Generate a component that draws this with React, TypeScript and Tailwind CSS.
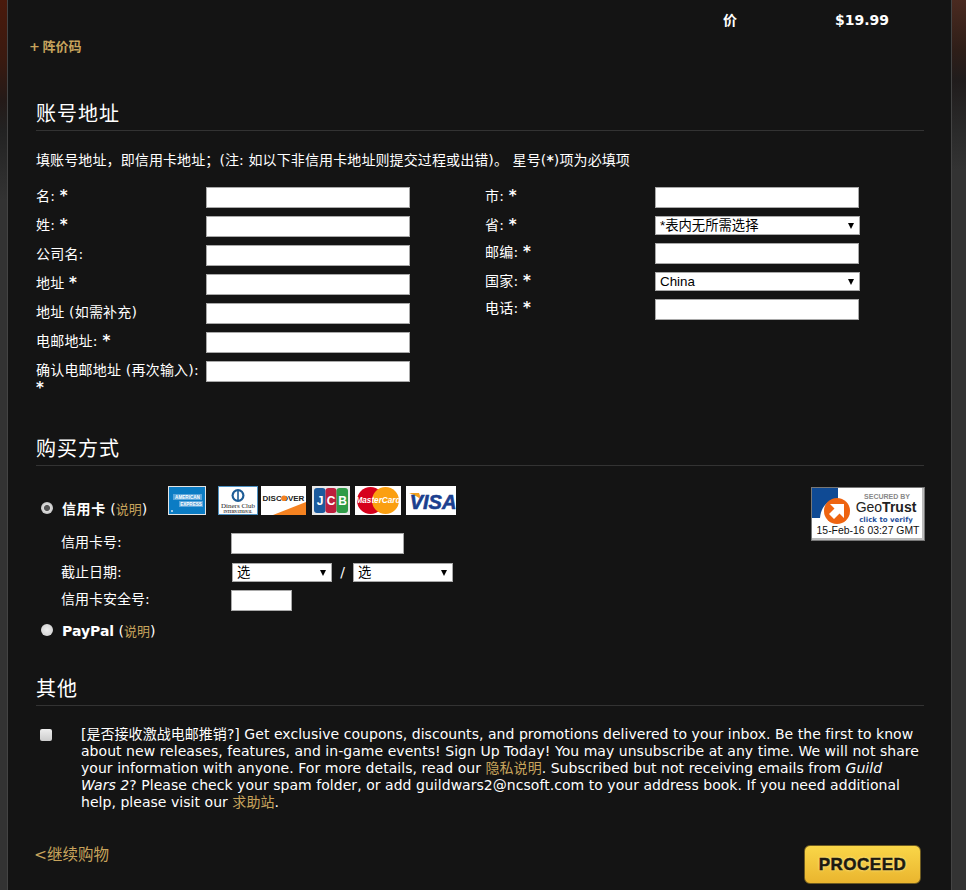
const SANS = "font-['DejaVu_Sans','Noto_Sans_CJK_SC',sans-serif]";

const SectionTitle = ({ title }: { title: string }) => (
  <h2 className="h-[29px] border-b border-[#333] text-[20px] leading-[24px] tracking-[1px] text-white">
    {title}
  </h2>
);

const TextField = ({ width = "w-[204px]" }: { width?: string }) => (
  <input
    type="text"
    className={`h-[21px] ${width} border border-[#a9a9a9] bg-white`}
  />
);

const SelectField = ({ value, width }: { value: string; width: string }) => (
  <div
    className={`relative flex h-[19px] ${width} items-center border border-[#a9a9a9] bg-white pl-[4px] font-['Liberation_Sans','Noto_Sans_CJK_SC',sans-serif] text-[13.33px] text-black`}
  >
    <span>{value}</span>
    {/* dropdown arrow */}
    <span className="absolute top-[6px] right-[5px] h-0 w-0 border-x-[3.5px] border-t-[6px] border-x-transparent border-t-black" />
  </div>
);

const Row = ({
  label,
  required,
  children,
}: {
  label: string;
  required?: boolean;
  children: React.ReactNode;
}) => (
  <div className="flex items-start">
    <label className="w-[170px] shrink-0 leading-[18px] tracking-[0.2px]">
      {label}
      {required && (
        <>
          {" "}
          <b className="text-[15px]">*</b>
        </>
      )}
    </label>
    {children}
  </div>
);

const Amex = () => (
  <svg width="38" height="29" viewBox="0 0 38 29">
    <rect width="38" height="29" fill="#e4e4e4" />
    <rect x="1" y="1" width="36" height="27" fill="#0b7cc4" />
    <rect x="5" y="8" width="29" height="6" fill="#5aa5da" />
    <rect x="11" y="15" width="24" height="6" fill="#5aa5da" />
    <text x="19.5" y="12.8" textAnchor="middle" fontSize="4.6" fontWeight="700" fill="#fff" fontFamily="Liberation Sans">AMERICAN</text>
    <text x="23" y="19.8" textAnchor="middle" fontSize="4.6" fontWeight="700" fill="#fff" fontFamily="Liberation Sans">EXPRESS</text>
    <circle cx="4" cy="25" r="1" fill="#cfe6f6" />
  </svg>
);

const Diners = () => (
  <svg width="40" height="29" viewBox="0 0 40 29">
    <rect x="0.5" y="0.5" width="39" height="28" fill="#fff" stroke="#4f93c4" />
    <circle cx="20" cy="9.5" r="6.5" fill="#1d5c96" />
    <circle cx="20" cy="9.5" r="4.3" fill="#fff" />
    <rect x="19.2" y="5" width="1.6" height="9" fill="#1d5c96" />
    <text x="20" y="22" textAnchor="middle" fontSize="7" fill="#222" fontFamily="Liberation Serif">Diners Club</text>
    <text x="20" y="26.5" textAnchor="middle" fontSize="3.4" fontWeight="700" fill="#222" fontFamily="Liberation Serif">INTERNATIONAL</text>
  </svg>
);

const Discover = () => (
  <svg width="45" height="29" viewBox="0 0 45 29">
    <rect width="45" height="29" fill="#fff" />
    <path d="M12 29 L45 16 V29 Z" fill="#f58220" />
    <text x="22.5" y="15" textAnchor="middle" fontSize="8" fontWeight="700" fill="#222" fontFamily="Liberation Sans">DISCOVER</text>
    <circle cx="23" cy="12.2" r="2.8" fill="#f58220" />
  </svg>
);

const Jcb = () => (
  <svg width="38" height="29" viewBox="0 0 38 29">
    <rect width="38" height="29" fill="#e8e8e8" />
    <rect x="2" y="2" width="11.5" height="25" rx="3" fill="#1b5a9d" />
    <rect x="13.5" y="2" width="11" height="25" rx="3" fill="#bd1f3d" />
    <rect x="24.5" y="2" width="11.5" height="25" rx="3" fill="#2f9b47" />
    <text x="8" y="19" textAnchor="middle" fontSize="12" fontWeight="700" fill="#fff" fontFamily="Liberation Sans">J</text>
    <text x="19" y="19" textAnchor="middle" fontSize="12" fontWeight="700" fill="#fff" fontFamily="Liberation Sans">C</text>
    <text x="30.5" y="19" textAnchor="middle" fontSize="12" fontWeight="700" fill="#fff" fontFamily="Liberation Sans">B</text>
  </svg>
);

const MasterCard = () => (
  <svg width="46" height="29" viewBox="0 0 46 29">
    <rect width="46" height="29" fill="#fff" />
    <circle cx="15.5" cy="14.5" r="13.5" fill="#d6001c" />
    <circle cx="30.5" cy="14.5" r="13.5" fill="#fb9f10" />
    <text x="23" y="17" textAnchor="middle" fontSize="8.2" fontWeight="700" fontStyle="italic" fill="#fff" fontFamily="Liberation Sans">MasterCard</text>
  </svg>
);

const Visa = () => (
  <svg width="50" height="29" viewBox="0 0 50 29">
    <rect width="50" height="29" fill="#fff" />
    <path d="M3 7 H13 L16 15 C13 11 8 9 3 7 Z" fill="#f2a01e" />
    <text x="27" y="22.5" textAnchor="middle" fontSize="20" fontWeight="700" fontStyle="italic" fill="#1a3f8f" stroke="#1a3f8f" strokeWidth="0.6" fontFamily="Liberation Sans">VISA</text>
  </svg>
);

const GeoTrust = () => (
  <div className="-mr-[1px] mt-[1px] h-[54px] w-[114px] shrink-0">
    <svg width="114" height="54" viewBox="0 0 114 54">
      <rect width="114" height="54" fill="#777" />
      <rect x="1" y="1" width="112" height="52" fill="#bbb" />
      <rect x="1" y="1" width="110" height="50" fill="#fff" />
      <path d="M1 1 H27 V12 C16 13 10 20 9 31 H1 Z" fill="#0f4a94" />
      <circle cx="26" cy="24" r="13" fill="#ee6411" />
      <path d="M19 17 H33 V31 L28.5 26.5 L23 32 L18 27 L23.5 21.5 Z" fill="#fff" />
      <text x="76" y="12" textAnchor="middle" fontSize="7" fontWeight="700" fill="#888" fontFamily="Liberation Sans">SECURED BY</text>
      <text x="75" y="25" textAnchor="middle" fontSize="14" fill="#222" fontFamily="Liberation Sans">
        Geo<tspan fontWeight="700">Trust</tspan>
      </text>
      <text x="75" y="34.5" textAnchor="middle" fontSize="7" fontWeight="700" fill="#1f4f9c" fontFamily="DejaVu Sans">click to verify</text>
      <text x="57" y="47" textAnchor="middle" fontSize="10.4" fill="#111" fontFamily="Liberation Sans">15-Feb-16 03:27 GMT</text>
    </svg>
  </div>
);

export default function App() {
  return (
    <div className={`flex h-[890px] w-[966px] overflow-hidden bg-[#333] text-[14px] text-white ${SANS}`}>
      {/* left page edge */}
      <div className="w-[8px] shrink-0 border-r border-[#444] bg-[linear-gradient(180deg,#4a1a0c_0,#3a1a10_60px,#241a18_100px,#222_130px,#333_200px)]" />

      <main className="w-[943px] shrink-0 bg-[#141414] pr-[27px] pl-[28px]">
        {/* Order total */}
        <div className="flex h-[29px] items-end text-[14px] leading-[18px] font-bold">
          <span className="ml-[687px] w-[112px]">价</span>
          <span>$19.99</span>
        </div>
        <a className="-ml-[7px] mt-[10px] block text-[13px] leading-[16px] font-bold text-[#c8a45c] [word-spacing:-2px]">+ 阵价码</a>

        {/* Billing address */}
        <section className="mt-[47px]">
          <SectionTitle title="账号地址" />
          <p className="mt-[20px] leading-[18px] tracking-[0.11px]">
            填账号地址，即信用卡地址；(注: 如以下非信用卡地址则提交过程或出错)。 星号(<b>*</b>)项为必填项
          </p>
          <div className="mt-[18px] flex">
            <div className="flex w-[449px] flex-col gap-[8px]">
              <Row label="名:" required><TextField /></Row>
              <Row label="姓:" required><TextField /></Row>
              <Row label="公司名:"><TextField /></Row>
              <Row label="地址" required><TextField /></Row>
              <Row label="地址 (如需补充)"><TextField /></Row>
              <Row label="电邮地址:" required><TextField /></Row>
              <Row label="确认电邮地址 (再次输入):" required><TextField /></Row>
            </div>
            <div className="flex flex-col">
              <Row label="市:" required><TextField /></Row>
              <div className="mt-[8px]"><Row label="省:" required><SelectField value="*表内无所需选择" width="w-[205px]" /></Row></div>
              <div className="mt-[8px]"><Row label="邮编:" required><TextField /></Row></div>
              <div className="mt-[8px]"><Row label="国家:" required><SelectField value="China" width="w-[205px]" /></Row></div>
              <div className="mt-[8px]"><Row label="电话:" required><TextField /></Row></div>
            </div>
          </div>
        </section>

        {/* Payment method */}
        <section className="mt-[40px]">
          <SectionTitle title="购买方式" />
          <div className="mt-[20px] flex items-start justify-between">
            <div>
              <div className="flex items-start">
                <input
                  type="radio"
                  readOnly
                  className="mt-[16px] ml-[5px] h-[12px] w-[12px] appearance-none rounded-full bg-[radial-gradient(circle,#555_0,#555_30%,#ddd_42%,#aaa_100%)]"
                />
                <div className="mt-[14px] ml-[9px] w-[106px] leading-[18px]">
                  <b className="tracking-[0.6px]">信用卡</b> (<span className="text-[13px] text-[#c8a45c]">说明</span>)
                </div>
                <div className="flex items-center gap-[3px]">
                  <Amex />
                  <div className="ml-[9px]"><Diners /></div>
                  <Discover />
                  <div className="ml-[3px]"><Jcb /></div>
                  <div className="ml-[2px]"><MasterCard /></div>
                  <div className="ml-[2px]"><Visa /></div>
                </div>
              </div>
              <div className="mt-[14px] ml-[25px] flex flex-col">
                <div className="flex items-start">
                  <label className="w-[170px] leading-[18px]">信用卡号:</label>
                  <TextField width="w-[173px]" />
                </div>
                <div className="mt-[9px] flex items-start">
                  <label className="w-[171px] leading-[18px]">截止日期:</label>
                  <SelectField value="选" width="w-[100px]" />
                  <span className="w-[21px] text-center leading-[18px]">/</span>
                  <SelectField value="选" width="w-[100px]" />
                </div>
                <div className="mt-[8px] flex items-start">
                  <label className="w-[170px] leading-[18px]">信用卡安全号:</label>
                  <TextField width="w-[61px]" />
                </div>
              </div>
              <div className="mt-[11px] flex items-start">
                <input
                  type="radio"
                  readOnly
                  className="mt-[2px] ml-[5px] h-[12px] w-[12px] appearance-none rounded-full bg-[radial-gradient(circle,#eee_0,#ccc_100%)]"
                />
                <div className="ml-[9px] leading-[18px]">
                  <b>PayPal</b> (<span className="text-[13px] text-[#c8a45c]">说明</span>)
                </div>
              </div>
            </div>
            <GeoTrust />
          </div>
        </section>

        {/* Other */}
        <section className="mt-[36px]">
          <SectionTitle title="其他" />
          <div className="mt-[20px] flex items-start">
            <input
              type="checkbox"
              readOnly
              className="mt-[3px] ml-[4px] h-[12px] w-[12px] shrink-0 appearance-none rounded-[2px] bg-gradient-to-b from-[#eee] to-[#ccc]"
            />
            <p className="mr-[4px] ml-[29px] text-[14px] leading-[17px] tracking-[0.04px]">
              [是否接收激战电邮推销?] Get exclusive coupons, discounts, and promotions delivered to your inbox. Be the first to know about new releases, features, and in-game events! Sign Up Today! You may unsubscribe at any time. We will not share your information with anyone. For more details, read our <a className="text-[#c8a45c]">隐私说明</a>. Subscribed but not receiving emails from <i>Guild Wars 2</i>? Please check your spam folder, or add guildwars2@ncsoft.com to your address book. If you need additional help, please visit our <a className="text-[#c8a45c]">求助站</a>.
            </p>
          </div>
        </section>

        {/* Footer actions */}
        <div className="mt-[34px] flex items-start justify-between">
          <a className="-ml-[2px] text-[15.5px] leading-[20px] text-[#c8a45c]">&lt;继续购物</a>
          <button className="mr-[3px] h-[39px] w-[117px] rounded-[6px] border border-[#6d5a20] bg-gradient-to-b from-[#f9d648] to-[#eab52e] font-['Liberation_Sans',sans-serif] text-[17px] font-bold tracking-[0.5px] text-[#1c1a10] [-webkit-text-stroke:0.5px_#1c1a10] [text-shadow:0_0_3px_#fff3b0]">
            PROCEED
          </button>
        </div>
      </main>

      {/* right page edge */}
      <div className="flex-1 border-l border-[#444] bg-[linear-gradient(180deg,#4a2a20_0,#2e1e18_50px,#201c1c_80px,#2a2a2a_130px,#333_170px)]" />
    </div>
  );
}
